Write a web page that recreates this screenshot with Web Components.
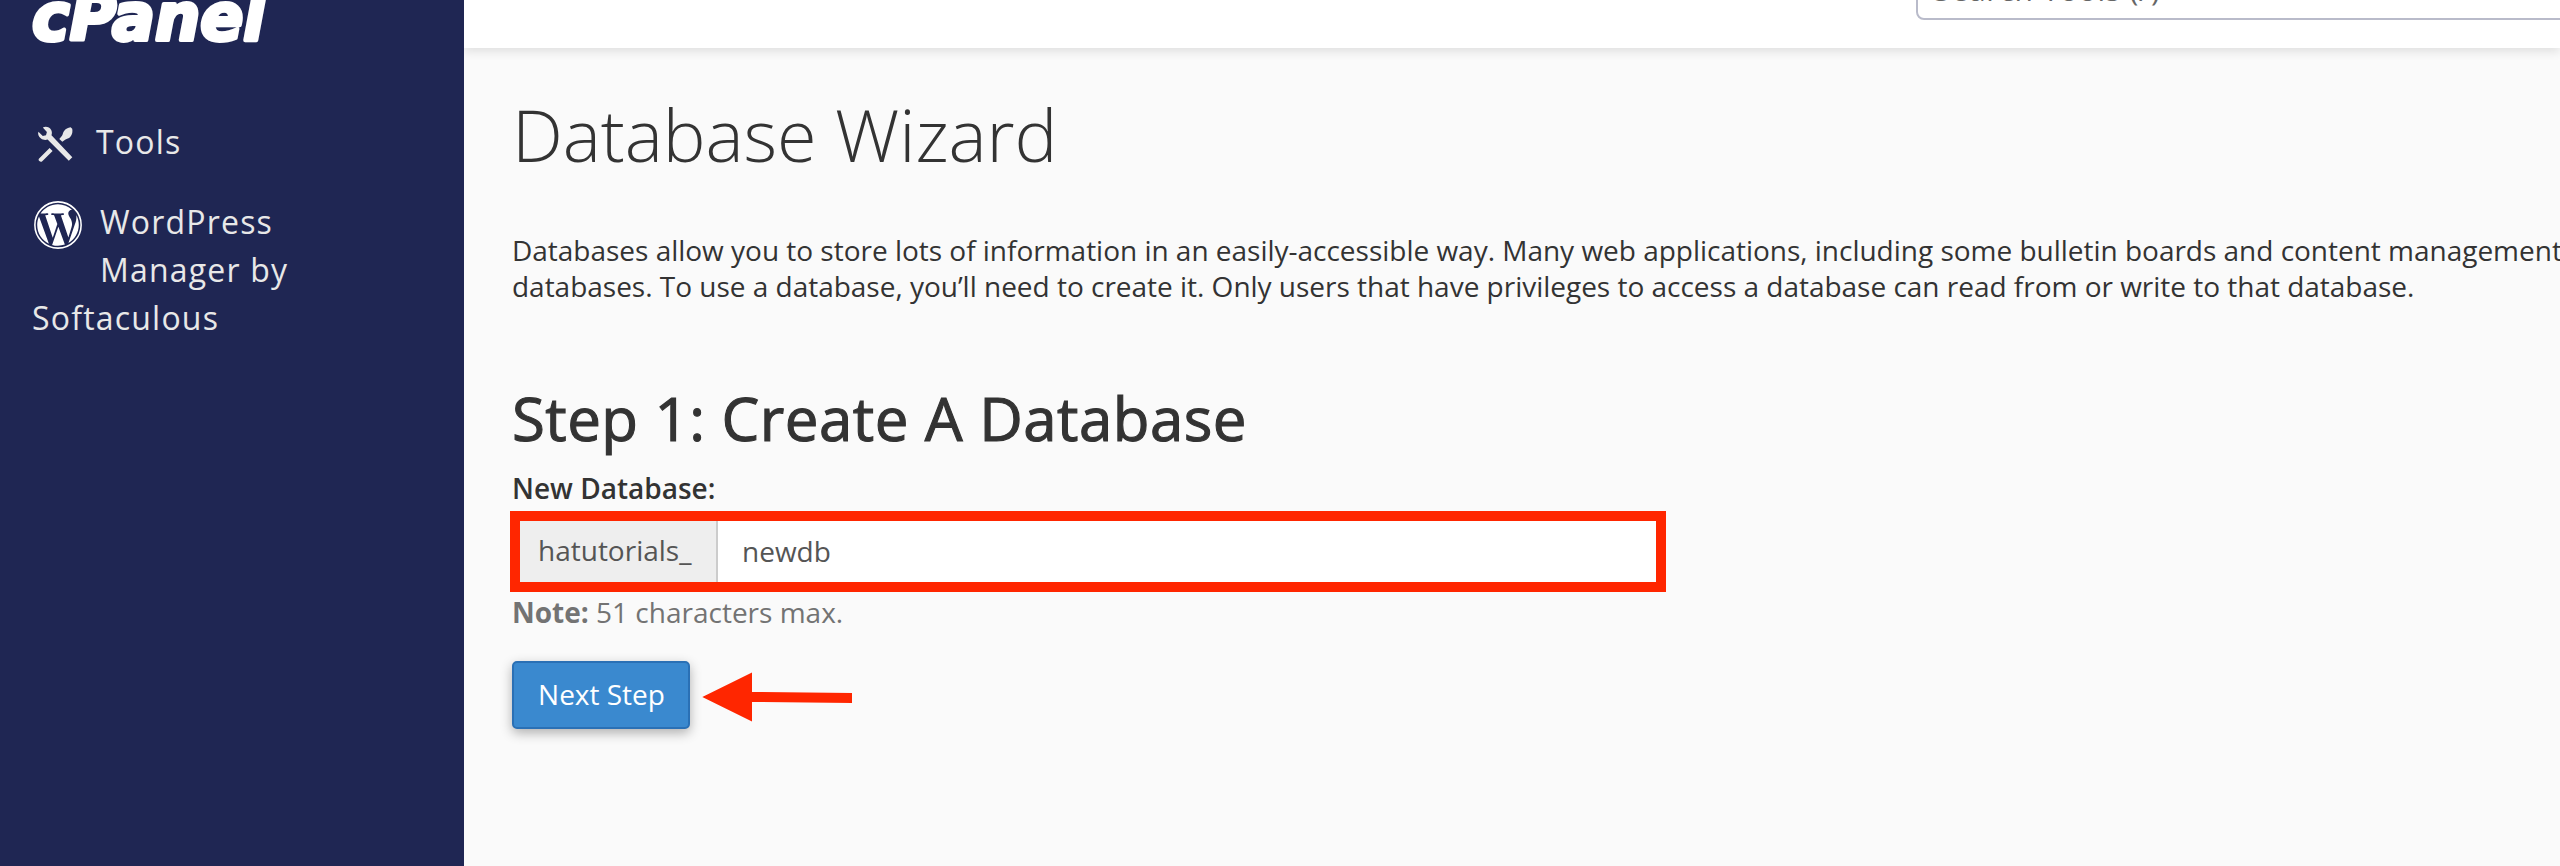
<!DOCTYPE html>
<html lang="en">
<head>
<meta charset="utf-8">
<title>Database Wizard</title>
<style>
  html, body { margin: 0; height: 100%; overflow: hidden; }
  body { font: 28px/36px "Open Sans", "Noto Sans", sans-serif; color: #333; background: #fafafa; }
</style>
</head>
<body>
<cp-layout>
  <cp-sidebar slot="side">
    <cp-nav-item icon="tools">Tools</cp-nav-item>
    <cp-nav-item icon="wordpress">WordPress Manager by Softaculous</cp-nav-item>
  </cp-sidebar>
  <cp-header slot="top">Search Tools (/)</cp-header>
  <cp-wizard>
    <span slot="title">Database Wizard</span>
    <span slot="intro">Databases allow you to store lots of information in an easily-accessible way. Many web applications, including some bulletin boards and content management<br>databases. To use a database, you’ll need to create it. Only users that have privileges to access a database can read from or write to that database.</span>
    <span slot="step">Step 1: Create A Database</span>
    <cp-prefixed-field prefix="hatutorials_" value="newdb">
      <span slot="label">New Database:</span>
      <span slot="note"><b>Note:</b> 51 characters max.</span>
    </cp-prefixed-field>
    <cp-button slot="action">Next Step</cp-button>
    <cp-arrow slot="action"></cp-arrow>
  </cp-wizard>
</cp-layout>

<script>
// Base class: renders the template of each component in its shadow root
class CpElement extends HTMLElement {
  constructor() {
    super();
    this.attachShadow({ mode: "open" });
  }

  connectedCallback() {
    const template = document.createElement("template");
    template.innerHTML = this.render();
    this.shadowRoot.replaceChildren(template.content.cloneNode(true));
  }
}

class CpLayout extends CpElement {
  render() {
    return `
      <style>
        :host { display: flex; height: 866px; overflow: hidden; }
        .content { flex: 1; min-width: 0; display: flex; flex-direction: column; overflow: hidden; }
      </style>
      <slot name="side"></slot>
      <div class="content">
        <slot name="top"></slot>
        <slot></slot>
      </div>
    `;
  }
}

class CpSidebar extends CpElement {
  render() {
    return `
      <style>
        :host {
          display: block; box-sizing: border-box; flex: none;
          width: 464px; padding: 0 70px 0 32px;
          background: #1f2653; color: #e8e8e8;
        }
        svg { display: block; }
        nav { display: flex; flex-direction: column; gap: 32px; margin-top: 58px; }
        text {
          font: italic bold 66px "DejaVu Sans", sans-serif;
          fill: #fff; stroke: #fff; stroke-width: 4; stroke-linejoin: round;
        }
      </style>
      <svg width="240" height="60" viewBox="0 0 240 60" aria-label="cPanel">
        <text x="0" y="40" textLength="233" lengthAdjust="spacingAndGlyphs">cPanel</text>
      </svg>
      <nav><slot></slot></nav>
    `;
  }
}

const ICONS = {
  tools: `
    <svg class="tools" width="36" height="36" viewBox="0 0 36 36" fill="currentColor">
      <path d="M5.8 1.4C9 .2 12.6 1 14.2 4c.8 1.5.9 3.4.3 5.2L35.3 31.3l-3.5 3.5L10.6 13.5c-2 .8-4.7.5-6.6-1C1.5 10.8.6 8.2 1.4 5.8l4.4 4.2 3.2-.8.9-3.3z"/>
      <path d="M35.2 2.8c.6 2.5.2 5.8-2 8.2-1.5 1.6-3.3 1.7-4.7 2.4l-3.2 2.3-3-2.8 2.7-3.1c.9-1.3.7-3.1 1.9-4.6 1.8-2.3 4-3.6 6.7-3.9z"/>
      <path d="M12.6 22.1l3 3L5 35.4c-.8.8-1.9.5-2.7-.3s-1-1.8-.2-2.6z"/>
    </svg>`,
  wordpress: `
    <svg class="wordpress" width="48" height="48" viewBox="-12.45 -12.45 24.9 24.9" fill="#fff">
      <circle r="12" fill="none" stroke="#fff" stroke-width=".8"/>
      <path transform="translate(-12 -12)" d="M21.469 6.825c.84 1.537 1.318 3.3 1.318 5.175 0 3.979-2.156 7.456-5.363 9.325l3.295-9.527c.615-1.54.82-2.771.82-3.864 0-.405-.026-.78-.07-1.11m-7.981.105c.647-.03 1.232-.105 1.232-.105.582-.075.514-.93-.067-.899 0 0-1.755.135-2.88.135-1.064 0-2.85-.15-2.85-.15-.585-.03-.661.855-.075.885 0 0 .54.061 1.125.09l1.68 4.605-2.37 7.08L5.354 6.9c.649-.03 1.234-.1 1.234-.1.585-.075.516-.93-.065-.896 0 0-1.746.138-2.874.138-.2 0-.438-.008-.69-.015C4.911 3.15 8.235 1.215 12 1.215c2.809 0 5.365 1.072 7.286 2.833-.046-.003-.091-.009-.141-.009-1.06 0-1.812.923-1.812 1.914 0 .89.513 1.643 1.06 2.531.411.72.89 1.643.89 2.977 0 .915-.354 1.994-.821 3.479l-1.075 3.585-3.9-11.61zM12 22.784c-1.059 0-2.081-.153-3.048-.437l3.237-9.406 3.315 9.087c.024.053.05.101.078.149-1.12.393-2.325.609-3.582.609M1.211 12c0-1.564.336-3.05.935-4.39L7.29 21.709C3.694 19.96 1.212 16.271 1.211 12"/>
    </svg>`
};

class CpNavItem extends CpElement {
  render() {
    return `
      <style>
        :host { display: block; font-size: 32px; line-height: 48px; letter-spacing: 1.2px; }
        svg { float: left; }
        .tools { margin: 8px 23px 0 5px; }
        /* tall margin keeps the second line beside the icon */
        .wordpress { margin: 3px 18px 40px 2px; }
      </style>
      ${ICONS[this.getAttribute("icon")]}<slot></slot>
    `;
  }
}

class CpHeader extends CpElement {
  render() {
    return `
      <style>
        :host {
          display: flex; flex: none; justify-content: flex-end; align-items: flex-end;
          box-sizing: border-box; height: 48px; padding-bottom: 28px;
          background: #fff; box-shadow: 0 4px 9px rgba(0, 0, 0, .1);
        }
        .search {
          box-sizing: border-box; flex: none; width: 660px; height: 56px; margin-right: -16px;
          padding: 6px 16px; border: 2px solid #b9bbca; border-radius: 8px;
          color: #666; font-size: 30px; letter-spacing: .8px;
        }
      </style>
      <div class="search"><slot></slot></div>
    `;
  }
}

class CpWizard extends CpElement {
  render() {
    return `
      <style>
        :host { display: block; padding: 46px 0 0 48px; }
        h1, h2, p { margin: 0; white-space: nowrap; }
        h1 { font-size: 72px; font-weight: 300; line-height: 80px; letter-spacing: -.1px; }
        p { margin-top: 58px; letter-spacing: -.015px; }
        /* the stroke gives a weight between regular and semibold */
        h2 {
          margin-top: 81px; font-size: 60px; font-weight: 400; line-height: 66px;
          letter-spacing: .46px; -webkit-text-stroke: 1.1px #333;
        }
        .actions { display: flex; align-items: center; gap: 12px; margin-top: 31px; }
      </style>
      <h1><slot name="title"></slot></h1>
      <p><slot name="intro"></slot></p>
      <h2><slot name="step"></slot></h2>
      <slot></slot>
      <div class="actions"><slot name="action"></slot></div>
    `;
  }
}

class CpPrefixedField extends CpElement {
  render() {
    return `
      <style>
        :host { display: block; margin-top: 19px; }
        .label { font-weight: 600; }
        .group {
          display: flex; box-sizing: border-box; width: 1156px; height: 81px;
          margin: 5px 0 2px -2px; border: 10px solid #ff2600;
          background: #fff; color: #555;
        }
        .prefix {
          box-sizing: border-box; width: 198px; padding-left: 18px;
          background: #eee; border-right: 2px solid #ccc; line-height: 58px;
        }
        .value { padding-left: 24px; line-height: 60px; }
        .note { color: #737373; }
      </style>
      <div class="label"><slot name="label"></slot></div>
      <div class="group">
        <span class="prefix">${this.getAttribute("prefix")}</span>
        <span class="value">${this.getAttribute("value")}</span>
      </div>
      <div class="note"><slot name="note"></slot></div>
    `;
  }
}

class CpButton extends CpElement {
  render() {
    return `
      <style>
        button {
          display: block; box-sizing: border-box; width: 178px; height: 68px; padding: 0 0 2px 1px;
          border: 2px solid #2a70b5; border-radius: 5px;
          background: #3a89cf; color: #fff; font: inherit;
          box-shadow: 0 4px 12px rgba(0, 0, 0, .3);
        }
      </style>
      <button><slot></slot></button>
    `;
  }
}

class CpArrow extends CpElement {
  render() {
    return `
      <style>
        :host { display: block; height: 52px; margin-top: 4px; }
        svg { display: block; }
      </style>
      <svg width="150" height="52" viewBox="0 0 150 52" fill="#ff2600">
        <path d="M.3 26L50 1.5V21l100 1v10L50 31v19.500z"/>
      </svg>
    `;
  }
}

customElements.define("cp-layout", CpLayout);
customElements.define("cp-sidebar", CpSidebar);
customElements.define("cp-nav-item", CpNavItem);
customElements.define("cp-header", CpHeader);
customElements.define("cp-wizard", CpWizard);
customElements.define("cp-prefixed-field", CpPrefixedField);
customElements.define("cp-button", CpButton);
customElements.define("cp-arrow", CpArrow);
</script>
</body>
</html>
